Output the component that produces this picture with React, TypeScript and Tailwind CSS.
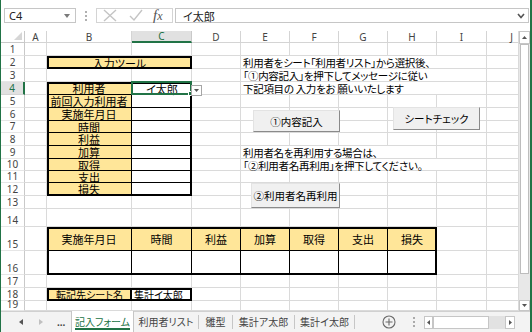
import React from "react";

const rowH = [13, 13, 13, 13, 13, 13, 12, 13, 13, 12, 12, 13, 13, 18, 24, 24, 13, 13, 10];
const colL = ["A", "B", "C", "D", "E", "F", "G", "H", "I", "J"];

const GRID =
  "grid grid-cols-[24px_22px_85px_60px_49px_49px_49px_49px_49px_50px_50px] grid-rows-[12px_13px_13px_13px_13px_13px_13px_12px_13px_13px_12px_12px_13px_13px_18px_24px_24px_13px_13px_10px]";

const JP = "font-['Noto_Sans_CJK_JP',sans-serif] [font-feature-settings:'palt']";

const labels = ["利用者", "前回入力利用者", "実施年月日", "時間", "利益", "加算", "取得", "支出", "損失"];
const labelRows = [
  "row-start-5",
  "row-start-6",
  "row-start-7",
  "row-start-8",
  "row-start-9",
  "row-start-10",
  "row-start-11",
  "row-start-12",
  "row-start-13",
];

const bottomHeads = ["実施年月日", "時間", "利益", "加算", "取得", "支出", "損失"];
const bottomCols = ["col-start-3", "col-start-4", "col-start-5", "col-start-6", "col-start-7", "col-start-8", "col-start-9"];

function BackgroundGrid() {
  return (
    <div className={`col-start-1 row-start-1 ${GRID} font-['Noto_Sans',sans-serif] text-[10px]`}>
      <div className="relative border-r border-b border-[#c9c9c9] bg-white">
        <svg className="absolute right-[2px] bottom-[2px]" width="8" height="8" viewBox="0 0 8 8">
          <polygon points="8,0 8,8 0,8" fill="#d6d6d6" />
        </svg>
      </div>
      {colL.map((c) =>
        c === "C" ? (
          <div
            key={c}
            className="flex items-center justify-center bg-[#e1e1e1] border-r border-r-[#c9c9c9] border-b-2 border-b-[#217346] text-[#217346] leading-[9px]"
          >
            {c}
          </div>
        ) : (
          <div
            key={c}
            className="flex items-center justify-center bg-white border-r border-b border-[#d4d4d4] text-[#444] leading-[10px]"
          >
            {c}
          </div>
        )
      )}
      {rowH.map((_, i) => (
        <React.Fragment key={i}>
          {i === 3 ? (
            <div className="flex items-end justify-center bg-[#e1e1e1] border-r-2 border-r-[#217346] border-b border-b-[#d4d4d4] text-[#217346] leading-[11px]">
              {i + 1}
            </div>
          ) : (
            <div className="flex items-end justify-center bg-white border-r border-r-[#c9c9c9] border-b border-b-[#e6e6e6] text-[#444] leading-[11px]">
              {i + 1}
            </div>
          )}
          {colL.map((c) => (
            <div key={c} className="border-r border-b border-[#dadada]" />
          ))}
        </React.Fragment>
      ))}
    </div>
  );
}

function Btn({ className, children }: { className: string; children: React.ReactNode }) {
  return (
    <div
      className={`absolute flex items-center justify-center bg-[#f0f0f0] border border-t-[#e3e3e3] border-l-[#e3e3e3] border-r-[#8a8a8a] border-b-[#8a8a8a] text-[10.5px] leading-[12px] text-black pt-[1px] whitespace-nowrap ${className}`}
    >
      {children}
    </div>
  );
}

const INSTR =
  "bg-white border-b border-[#dadada] pl-[2px] pt-[1px] text-[10.5px] tracking-[-0.3px] leading-[11px] whitespace-nowrap";

function ContentGrid() {
  return (
    <div className={`col-start-1 row-start-1 relative ${GRID} ${JP} text-[11px] text-black`}>
      {/* B2:C2 */}
      <div className="col-start-3 col-span-2 row-start-3 bg-[#ffe699] border-2 border-black flex items-center justify-center leading-[10px]">
        入力ツール
      </div>

      {/* B4:C12 */}
      {labels.map((l, i) => (
        <React.Fragment key={l}>
          <div
            className={`col-start-3 ${labelRows[i]} bg-[#ffe699] border-r border-b border-black flex items-center justify-center leading-[11px] whitespace-nowrap pt-[1px]`}
          >
            {l}
          </div>
          <div className={`col-start-4 ${labelRows[i]} bg-white border-b border-black`} />
        </React.Fragment>
      ))}
      <div className="col-start-4 row-start-5 flex items-center justify-center leading-[11px] pt-[1px]">イ太郎</div>
      <div className="col-start-3 col-span-2 row-start-5 row-span-9 border-2 border-black" />
      {/* selection */}
      <div className="col-start-4 row-start-5 relative -mt-px -ml-px border-2 border-[#217346]">
        <div className="absolute -right-[3px] -bottom-[3px] w-[5px] h-[5px] bg-[#217346] border border-white" />
        <div className="absolute left-[calc(100%+1px)] top-[2px] w-[11px] h-[11px] bg-white border border-[#a6a6a6] flex items-center justify-center">
          <svg width="5" height="3" viewBox="0 0 5 3">
            <polygon points="0,0 5,0 2.5,3" fill="#555" />
          </svg>
        </div>
      </div>

      {/* instructions */}
      <div className={`col-start-6 col-span-4 row-start-3 ${INSTR}`}>利用者をシート「利用者リスト」から選択後、</div>
      <div className={`col-start-6 col-span-4 row-start-4 ${INSTR}`}>「①内容記入」を押下してメッセージに従い</div>
      <div className={`col-start-6 col-span-4 row-start-5 ${INSTR}`}>下記項目の 入力をお 願いいたします</div>
      <div className={`col-start-6 col-span-3 row-start-10 ${INSTR}`}>利用者名を再利用する場合は、</div>
      <div className={`col-start-6 col-span-4 row-start-11 ${INSTR}`}>「②利用者名再利用」を押下してください。</div>

      {/* B15:H16 */}
      {bottomHeads.map((h, i) => (
        <React.Fragment key={h}>
          <div
            className={`${bottomCols[i]} row-start-16 bg-[#ffe699] border-r border-b border-black flex items-center justify-center leading-[12px]`}
          >
            {h}
          </div>
          <div className={`${bottomCols[i]} row-start-17 bg-white border-r border-b border-black`} />
        </React.Fragment>
      ))}
      <div className="col-start-3 col-span-7 row-start-16 row-span-2 border-2 border-black" />

      {/* B18:C18 */}
      <div className="col-start-3 row-start-19 bg-[#ffe699] border-2 border-black flex items-center justify-center text-[10px] leading-[9px] whitespace-nowrap">
        転記先シート名
      </div>
      <div className="col-start-4 row-start-19 bg-white border-2 border-l-0 border-black flex items-center pl-[2px] text-[10px] leading-[9px] whitespace-nowrap">
        集計イ太郎
      </div>

      {/* form buttons */}
      <Btn className="left-[252px] top-[79px] w-[87px] h-[22px]">①内容記入</Btn>
      <Btn className="left-[392px] top-[76px] w-[87px] h-[23px]">シートチェック</Btn>
      <Btn className="left-[250px] top-[152px] w-[89px] h-[25px]">②利用者名再利用</Btn>
    </div>
  );
}

function FormulaBar() {
  return (
    <div className="h-[31px] flex items-start pt-[8px] bg-white">
      <div className="ml-[3px] w-[72px] h-[15px] border border-[#c6c6c6] flex items-center justify-between pl-[4px] pr-[5px] font-['Noto_Sans',sans-serif] text-[11px] text-[#222] leading-[12px]">
        <span>C4</span>
        <svg width="6" height="4" viewBox="0 0 6 4">
          <polygon points="0,0 6,0 3,4" fill="#7a7a7a" />
        </svg>
      </div>
      <div className="ml-[9px] mt-[3px] flex flex-col gap-[2px]">
        <div className="w-[2px] h-[2px] bg-[#b0b0b0]" />
        <div className="w-[2px] h-[2px] bg-[#b0b0b0]" />
        <div className="w-[2px] h-[2px] bg-[#b0b0b0]" />
      </div>
      <div className="ml-[9px] w-[77px] h-[15px] border border-[#d4d4d4] flex items-center">
        <svg className="ml-[6px]" width="14" height="13" viewBox="0 0 14 13">
          <path d="M1 1 L13 12 M13 1 L1 12" stroke="#c4c4c4" strokeWidth="1.4" fill="none" />
        </svg>
        <svg className="ml-[12px]" width="14" height="13" viewBox="0 0 14 13">
          <path d="M1 7 L5 11 L13 1" stroke="#c4c4c4" strokeWidth="1.4" fill="none" />
        </svg>
        <span className="ml-[10px] font-['Liberation_Serif',serif] italic text-[15px] leading-[13px] text-[#555]">
          f<span className="text-[12px]">x</span>
        </span>
      </div>
      <div className="ml-[2px] flex-1 mr-[1px] h-[15px] border border-[#c6c6c6] flex items-center justify-between pl-[7px] pr-[3px]">
        <span className={`${JP} text-[11px] leading-[12px] text-[#222]`}>イ太郎</span>
        <svg width="8" height="6" viewBox="0 0 8 6">
          <path d="M1 1 L4 4.5 L7 1" stroke="#555" strokeWidth="1.6" fill="none" />
        </svg>
      </div>
    </div>
  );
}

function VScroll() {
  return (
    <div className="w-[12px] flex flex-col bg-[#e8e8e8] border-l border-[#dadada]">
      <div className="h-[13px] bg-white border border-[#c6c6c6] flex items-center justify-center">
        <svg width="5" height="3" viewBox="0 0 5 3">
          <polygon points="0,3 5,3 2.5,0" fill="#555" />
        </svg>
      </div>
      <div className="h-[230px] mx-px bg-white border border-[#bdbdbd]" />
      <div className="flex-1" />
      <div className="h-[11px] bg-white border border-[#c6c6c6] flex items-center justify-center">
        <svg width="5" height="3" viewBox="0 0 5 3">
          <polygon points="0,0 5,0 2.5,3" fill="#555" />
        </svg>
      </div>
    </div>
  );
}

function Sep() {
  return <div className="w-px h-[14px] bg-[#c6c6c6] self-center" />;
}

function TabBar() {
  return (
    <div className={`h-[21px] flex items-stretch border-t border-[#d0d0d0] bg-[#f3f3f3] ${JP} text-[10px] leading-[12px] text-[#444]`}>
      <div className="w-[70px] flex items-center">
        <svg className="ml-[18px]" width="4" height="6" viewBox="0 0 4 6">
          <polygon points="4,0 4,6 0,3" fill="#555" />
        </svg>
        <svg className="ml-[16px]" width="4" height="6" viewBox="0 0 4 6">
          <polygon points="0,0 0,6 4,3" fill="#c0c0c0" />
        </svg>
        <span className="ml-[14px] font-['Noto_Sans',sans-serif] font-bold text-[10px] leading-[10px] text-[#444]">...</span>
      </div>
      <div className="w-[63px] -mt-px bg-white border-x border-[#c6c6c6] flex items-center justify-center">
        <span className="text-[#217346] border-b-2 border-[#217346] leading-[13px] pt-[1px]">記入フォーム</span>
      </div>
      <div className="w-[64px] flex items-center justify-center">利用者リスト</div>
      <Sep />
      <div className="w-[33px] flex items-center justify-center">雛型</div>
      <Sep />
      <div className="w-[61px] flex items-center justify-center">集計ア太郎</div>
      <Sep />
      <div className="w-[59px] flex items-center justify-center">集計イ太郎</div>
      <Sep />
      <div className="w-[58px] flex items-center justify-end pr-[17px]">
        <svg width="14" height="14" viewBox="0 0 14 14">
          <circle cx="7" cy="7" r="6" stroke="#6a6a6a" strokeWidth="1.1" fill="none" />
          <path d="M7 3.5 V10.5 M3.5 7 H10.5" stroke="#6a6a6a" strokeWidth="1.1" />
        </svg>
      </div>
      <div className="w-[11px] flex flex-col items-start justify-center gap-[2px]">
        <div className="w-[2px] h-[2px] bg-[#aaa]" />
        <div className="w-[2px] h-[2px] bg-[#aaa]" />
        <div className="w-[2px] h-[2px] bg-[#aaa]" />
      </div>
      <div className="w-[91px] flex items-center">
        <div className="w-[9px] h-[13px] bg-white border border-[#c6c6c6] flex items-center justify-center">
          <svg width="3" height="5" viewBox="0 0 3 5">
            <polygon points="3,0 3,5 0,2.5" fill="#555" />
          </svg>
        </div>
        <div className="w-[56px] h-[13px] bg-white border border-[#c6c6c6]" />
        <div className="w-[16px] h-[13px] bg-[#e2e2e2]" />
        <div className="w-[10px] h-[13px] bg-white border border-[#c6c6c6] flex items-center justify-center">
          <svg width="3" height="5" viewBox="0 0 3 5">
            <polygon points="0,0 0,5 3,2.5" fill="#555" />
          </svg>
        </div>
      </div>
    </div>
  );
}

export default function App() {
  return (
    <div className="w-[532px] h-[332px] flex flex-col bg-white border-l border-l-[#217346] border-r-2 border-r-[#217346] overflow-hidden">
      <FormulaBar />
      <div className="flex h-[280px]">
        <div className="grid w-[517px] h-[280px] overflow-hidden">
          <BackgroundGrid />
          <ContentGrid />
        </div>
        <VScroll />
      </div>
      <TabBar />
    </div>
  );
}
